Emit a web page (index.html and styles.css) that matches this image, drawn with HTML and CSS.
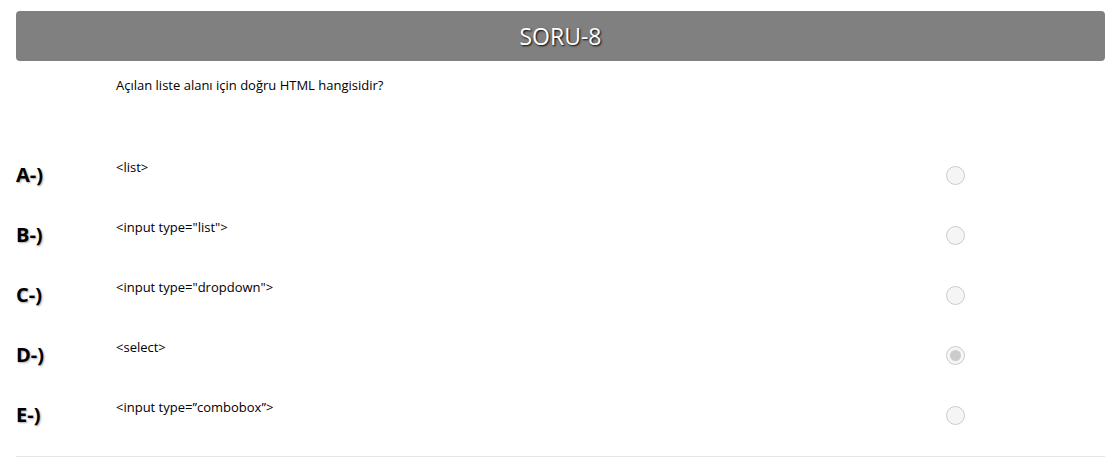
FILE: index.html
```html
<!DOCTYPE html>
<html lang="tr">
<head>
<meta charset="utf-8">
<title>SORU-8</title>
<link rel="stylesheet" href="styles.css">
</head>
<body>
<div class="page">
  <div class="header"><h1 class="title">SORU-8</h1></div>
  <p class="question">Açılan liste alanı için doğru HTML hangisidir?</p>
  <div class="options">
    <div class="option">
      <span class="label">A-)</span>
      <span class="text">&lt;list&gt;</span>
      <span class="radio"></span>
    </div>
    <div class="option">
      <span class="label">B-)</span>
      <span class="text">&lt;input type="list"&gt;</span>
      <span class="radio"></span>
    </div>
    <div class="option">
      <span class="label">C-)</span>
      <span class="text">&lt;input type="dropdown"&gt;</span>
      <span class="radio"></span>
    </div>
    <div class="option">
      <span class="label">D-)</span>
      <span class="text">&lt;select&gt;</span>
      <span class="radio checked"></span>
    </div>
    <div class="option">
      <span class="label">E-)</span>
      <span class="text">&lt;input type=”combobox”&gt;</span>
      <span class="radio"></span>
    </div>
  </div>
  <div class="divider"></div>
</div>
</body>
</html>
```

FILE: styles.css
```css
html, body {
  margin: 0;
  padding: 0;
  background: #fff;
}
body {
  font-family: "Open Sans", "DejaVu Sans", sans-serif;
  color: #000;
}
.page {
  padding: 11px 10px 0 16px;
}
.header {
  height: 50px;
  background: #808080;
  border-radius: 4px;
  display: flex;
  align-items: center;
  justify-content: center;
}
.title {
  margin: 0;
  font-size: 23px;
  font-weight: 400;
  color: #fff;
  text-shadow: 1px 1px 2px #000;
  line-height: 1;
}
.question {
  margin: 16px 0 0 100px;
  font-size: 13px;
  line-height: 17px;
}
.options {
  margin-top: 66px;
  display: flex;
  flex-direction: column;
  gap: 30px;
}
.option {
  display: grid;
  grid-template-columns: 100px 830px 20px;
  height: 30px;
  align-items: center;
}
.label {
  font-size: 20px;
  font-weight: 700;
  line-height: 30px;
  text-shadow: 1px 1px 2px #aaa;
}
.text {
  align-self: start;
  font-size: 13px;
  line-height: 16px;
  margin-top: -1px;
}
.radio {
  width: 17px;
  height: 17px;
  border: 1px solid #ccc;
  border-radius: 50%;
  background: #f5f5f5;
  display: flex;
  align-items: center;
  justify-content: center;
}
.radio.checked::after {
  content: "";
  width: 11px;
  height: 11px;
  border-radius: 50%;
  background: #ccc;
}
.divider {
  margin-top: 26px;
  height: 1px;
  background: #e5e5e5;
}
```
